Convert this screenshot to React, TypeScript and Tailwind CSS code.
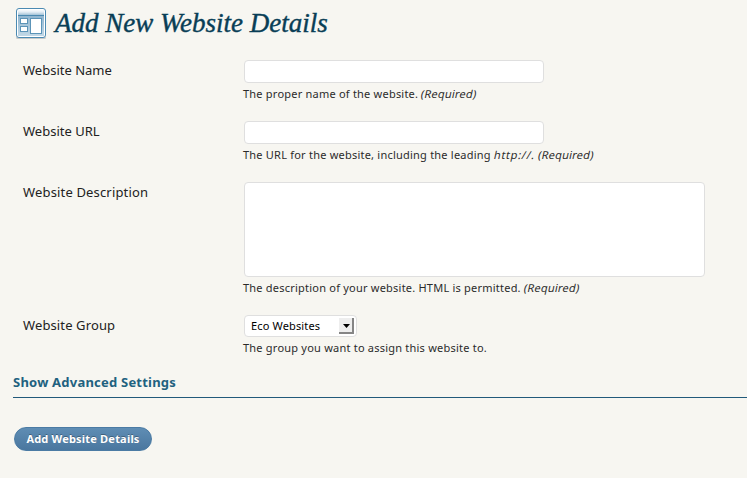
import type { ReactNode } from "react";

function SiteIcon() {
  return (
    <svg width="32" height="34" viewBox="0 0 32 34" className="shrink-0">
      <defs>
        <linearGradient id="head" x1="0" y1="0" x2="0" y2="1">
          <stop offset="0" stopColor="#f7fafc" />
          <stop offset="0.4" stopColor="#e3edf4" />
          <stop offset="1" stopColor="#a3c2d7" />
        </linearGradient>
        <linearGradient id="body" x1="0" y1="0" x2="0" y2="1">
          <stop offset="0" stopColor="#8fb5cf" />
          <stop offset="1" stopColor="#c2d8e6" />
        </linearGradient>
      </defs>
      <rect x="1" y="28" width="30" height="3" rx="1.5" fill="#c9cbca" />
      <rect x="1.5" y="0.5" width="29" height="29" rx="2.5" fill="#fff" stroke="#4b8ab2" />
      <rect x="3" y="2" width="26" height="5" fill="url(#head)" />
      <rect x="3" y="7" width="26" height="1" fill="#4b89b0" />
      <rect x="3" y="8" width="26" height="20" fill="url(#body)" />
      <rect x="5.5" y="10.5" width="7" height="5" fill="#fff" stroke="#5c94b8" />
      <rect x="5.5" y="18.5" width="7" height="5" fill="#fff" stroke="#5c94b8" />
      <rect x="15.5" y="10.5" width="11" height="15" fill="#fff" stroke="#5c94b8" />
    </svg>
  );
}

function Row({ label, tracking = "", className, children }: { label: string; tracking?: string; className: string; children: ReactNode }) {
  return (
    <div className={`flex ${className}`}>
      <div className={`w-[220px] shrink-0 text-[13px] leading-[20px] text-[#222] ${tracking}`}>{label}</div>
      <div>{children}</div>
    </div>
  );
}

function Hint({ children }: { children: ReactNode }) {
  return <p className="text-[11px] leading-[22px] tracking-[0.22px] whitespace-nowrap text-[#2b2b2b]">{children}</p>;
}

function Slanted({ children }: { children: ReactNode }) {
  return <em className="inline-block -skew-x-12 not-italic">{children}</em>;
}

const field = "ml-px block resize-none rounded-[4px] border border-[#dfdfdf] bg-white outline-none";

export default function App() {
  return (
    <main className="h-[478px] w-[747px] overflow-hidden bg-[#f7f6f1] font-['Noto_Sans',sans-serif]">
      <header className="flex h-[60px] pt-2 pl-[15px]">
        <SiteIcon />
        <h1 className="ml-[8px] font-['Liberation_Serif',serif] text-[27px] leading-[30px] whitespace-nowrap text-[#093e56] italic [-webkit-text-stroke:0.4px_#093e56]">
          Add New Website Details
        </h1>
      </header>
      <form className="pl-[23px]" onSubmit={(e) => e.preventDefault()}>
        <Row label="Website Name" className="h-[61px]">
          <input aria-label="Website Name" className={`${field} h-[23px] w-[300px]`} />
          <Hint>
            The proper name of the website. <Slanted>(Required)</Slanted>
          </Hint>
        </Row>
        <Row label="Website URL" className="h-[61px]">
          <input aria-label="Website URL" className={`${field} h-[23px] w-[300px]`} />
          <Hint>
            The URL for the website, including the leading <Slanted><span className="tracking-[0.7px]">http://.</span> (Required)</Slanted>
          </Hint>
        </Row>
        <Row label="Website Description" tracking="tracking-[0.16px]" className="h-[133px]">
          <textarea aria-label="Website Description" className={`${field} h-[95px] w-[461px]`} />
          <Hint>
            The description of your website. HTML is permitted. <Slanted>(Required)</Slanted>
          </Hint>
        </Row>
        <Row label="Website Group" tracking="tracking-[0.12px]" className="h-[58px]">
          <button
            type="button"
            className="ml-px flex h-[22px] w-[113px] items-center justify-between rounded-[4px] border border-[#dfdfdf] bg-white pr-[2px] pl-[6px] text-[11px] tracking-[0.15px] text-black"
          >
            <span>Eco Websites</span>
            <span className="flex h-4 w-[15px] items-center justify-center border-r-2 border-b-2 border-[#858585] bg-[#eee]">
              <svg width="7" height="4" viewBox="0 0 7 4" className="mt-px ml-px">
                <path d="M0 0h7L3.5 4z" />
              </svg>
            </span>
          </button>
          <Hint>The group you want to assign this website to.</Hint>
        </Row>
      </form>
      <section className="ml-[13px]">
        <h2 className="h-[25px] border-b border-[#21597a] text-[13px] leading-[18px] font-bold tracking-[0.22px] whitespace-nowrap text-[#21617f]">
          Show Advanced Settings
        </h2>
        <button className="mt-[29px] ml-px h-6 w-[138px] rounded-full border border-[#4b7ba4] bg-linear-to-b from-[#5f8db4] to-[#4a779f] text-[11px] leading-[22px] font-bold tracking-[0.2px] whitespace-nowrap text-white [text-shadow:0_-1px_0_rgba(0,0,0,0.3)]">
          Add Website Details
        </button>
      </section>
    </main>
  );
}
